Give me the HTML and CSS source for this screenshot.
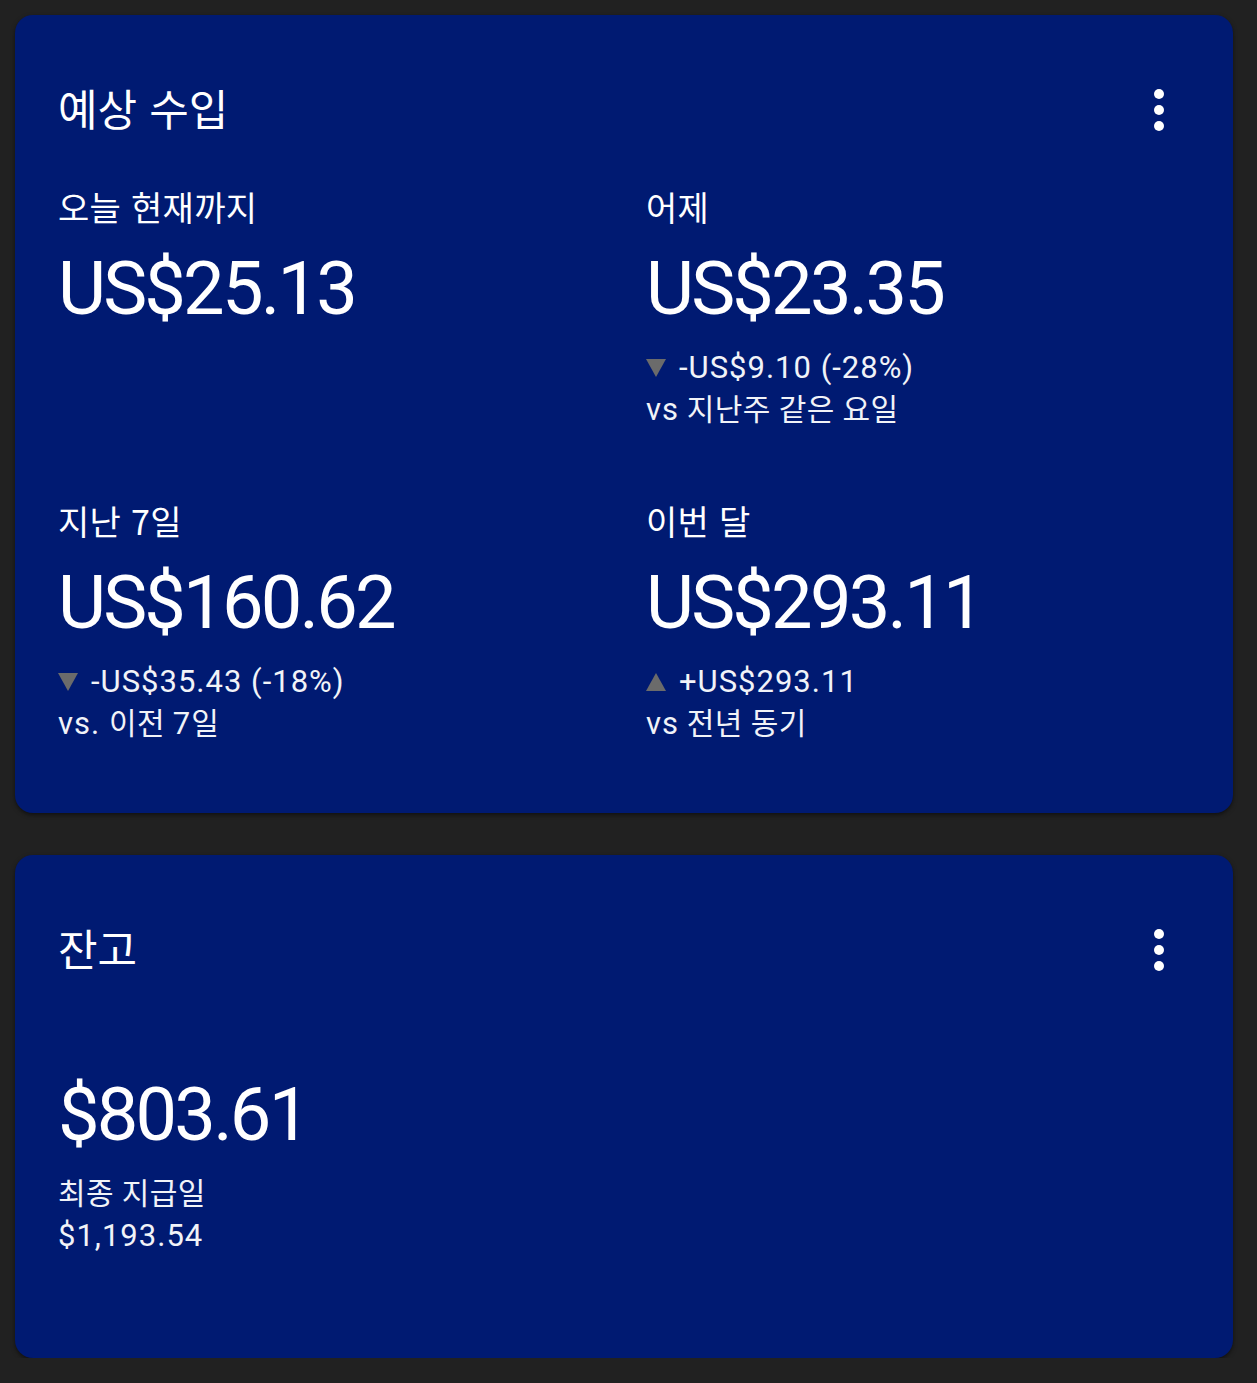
FILE: index.html
```html
<!DOCTYPE html>
<html lang="ko">
<head>
<meta charset="utf-8">
<link rel="stylesheet" href="styles.css">
</head>
<body>
<div class="page">
  <section class="card card-earnings">
    <header class="card-head">
      <h2 class="card-title">예상 수입</h2>
      <span class="more" aria-label="더보기"><i></i><i></i><i></i></span>
    </header>
    <div class="grid">
      <div class="cell">
        <div class="label">오늘 현재까지</div>
        <div class="amount">US$25.13</div>
      </div>
      <div class="cell">
        <div class="label">어제</div>
        <div class="amount">US$23.35</div>
        <div class="delta"><span class="tri down"></span>-US$9.10 (-28%)</div>
        <div class="cmp"><span class="lat">vs</span> 지난주 같은 요일</div>
      </div>
      <div class="cell">
        <div class="label">지난 7일</div>
        <div class="amount">US$160.62</div>
        <div class="delta"><span class="tri down"></span>-US$35.43 (-18%)</div>
        <div class="cmp"><span class="lat">vs. </span>이전 <span class="lat">7</span>일</div>
      </div>
      <div class="cell">
        <div class="label">이번 달</div>
        <div class="amount">US$293.11</div>
        <div class="delta"><span class="tri up"></span>+US$293.11</div>
        <div class="cmp"><span class="lat">vs</span> 전년 동기</div>
      </div>
    </div>
  </section>
  <section class="card card-balance">
    <header class="card-head">
      <h2 class="card-title">잔고</h2>
      <span class="more" aria-label="더보기"><i></i><i></i><i></i></span>
    </header>
    <div class="amount balance">$803.61</div>
    <div class="cmp paid-label">최종 지급일</div>
    <div class="cmp"><span class="lat">$1,193.54</span></div>
  </section>
</div>
</body>
</html>
```

FILE: styles.css
```css
html, body {
  margin: 0;
  padding: 0;
  background: #212121;
}
body {
  font-family: Roboto, "Noto Sans CJK KR", sans-serif;
  color: #ffffff;
}
.page {
  padding: 15px 0 0 15px;
  display: flex;
  flex-direction: column;
  gap: 42px;
  width: 1218px;
}
.card {
  background: #001a72;
  border-radius: 18px;
  box-shadow: 0 2px 4px rgba(0,0,0,0.5);
  padding: 68px 43px 68px 43px;
}
.card-balance {
  padding-bottom: 101px;
}
.card-head {
  display: flex;
  justify-content: space-between;
  align-items: center;
  height: 48px;
}
.card-title {
  margin: 0;
  font-family: "Noto Sans CJK KR", sans-serif;
  font-weight: 400;
  font-size: 43px;
  line-height: 48px;
}
.more {
  display: flex;
  flex-direction: column;
  gap: 6px;
  margin-right: 26px;
  margin-top: 6px;
}
.more i {
  display: block;
  width: 10px;
  height: 10px;
  border-radius: 50%;
  background: #fff;
}
.grid {
  display: grid;
  grid-template-columns: 588px 1fr;
  row-gap: 70px;
  margin-top: 56px;
}
.label {
  font-family: "Noto Sans CJK KR", sans-serif;
  font-size: 34px;
  line-height: 40px;
  letter-spacing: 0.3px;
}
.amount {
  font-family: Roboto, sans-serif;
  font-size: 74px;
  line-height: 80px;
  margin-top: 22px;
  letter-spacing: -2.8px;
}
.delta, .cmp {
  font-family: Roboto, "Noto Sans CJK KR", sans-serif;
  font-size: 30px;
  line-height: 42px;
  letter-spacing: 0.4px;
  color: #f1f3f8;
}
.delta, .lat {
  font-size: 31px;
  letter-spacing: 1px;
}
.delta {
  margin-top: 18px;
  display: flex;
  align-items: center;
}
.tri {
  width: 0;
  height: 0;
  border-left: 10px solid transparent;
  border-right: 10px solid transparent;
  margin-right: 13px;
}
.tri.down {
  border-top: 18px solid #6b6b6b;
}
.tri.up {
  border-bottom: 18px solid #6b6b6b;
}
.balance {
  margin-top: 104px;
}
.paid-label {
  margin-top: 18px;
}
```
